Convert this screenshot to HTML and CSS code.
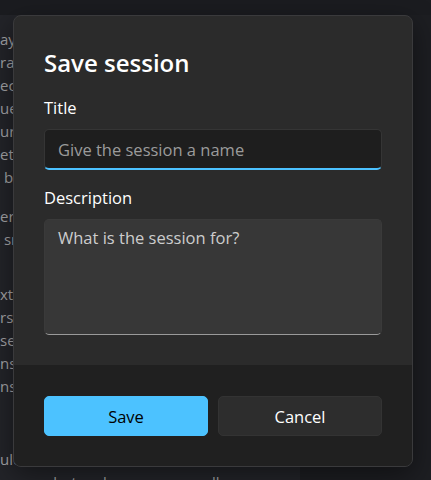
FILE: index.html
```html
<!DOCTYPE html>
<html lang="en">
<head>
<meta charset="utf-8">
<title>Save session</title>
<link rel="stylesheet" href="styles.css">
</head>
<body>
<div class="app">
  <div class="topbar"></div>
  <div class="main">
    <div class="doc">
      <div class="para p1">
        <div class="ln">ay</div>
        <div class="ln">ra</div>
        <div class="ln">ec</div>
        <div class="ln">ue</div>
        <div class="ln">ur</div>
        <div class="ln">et</div>
        <div class="ln">&nbsp;b</div>
      </div>
      <div class="para p2">
        <div class="ln">er</div>
        <div class="ln">&nbsp;sn</div>
      </div>
      <div class="para p3">
        <div class="ln">xt</div>
        <div class="ln">rsa</div>
        <div class="ln">se</div>
        <div class="ln">ns</div>
        <div class="ln">ns</div>
      </div>
      <div class="para p4">
        <div class="ln">ulc</div>
        <div class="ln">e snapshot, unless you manually save</div>
      </div>
    </div>
    <div class="side"></div>
  </div>

  <div class="dialog">
    <div class="dialog-body">
      <h1 class="dialog-title">Save session</h1>
      <label class="field-label">Title</label>
      <div class="input input-active"><span class="placeholder">Give the session a name</span></div>
      <label class="field-label label-desc">Description</label>
      <div class="textarea"><span class="ta-text">What is the session for?</span></div>
    </div>
    <div class="dialog-footer">
      <button class="btn btn-primary">Save</button>
      <button class="btn btn-secondary">Cancel</button>
    </div>
  </div>
</div>
</body>
</html>
```

FILE: styles.css
```css
html, body {
  margin: 0;
  padding: 0;
  height: 100%;
  background: #1c1d21;
  overflow: hidden;
}

.app {
  position: relative;
  width: 431px;
  height: 480px;
  display: flex;
  flex-direction: column;
  font-family: "Open Sans", "Noto Sans", sans-serif;
}

.topbar {
  height: 15px;
  background: #1b1c20;
  flex: none;
}

.main {
  flex: 1;
  display: flex;
}

.doc {
  width: 300px;
  background: #232429;
  padding-top: 13px;
  color: #a3a3a6;
  font-size: 15px;
  line-height: 23px;
  white-space: nowrap;
  overflow: hidden;
}

.ln {
  height: 23px;
}

.p2 { margin-top: 16px; }
.p3 { margin-top: 32px; }
.p4 { margin-top: 50px; }

.side {
  flex: 1;
  background: #1d1e22;
}

/* Dialog */
.dialog {
  position: absolute;
  left: 13px;
  top: 15px;
  width: 400px;
  height: 452px;
  box-sizing: border-box;
  border: 1px solid #3a3a3c;
  border-radius: 8px;
  background: #2b2b2b;
  display: flex;
  flex-direction: column;
  overflow: hidden;
  box-shadow: 0 8px 28px rgba(0, 0, 0, 0.45);
}

.dialog-body {
  flex: 1;
  padding: 31px 30px 0;
  display: flex;
  flex-direction: column;
}

.dialog-title {
  margin: 0;
  font-size: 24px;
  font-weight: 600;
  line-height: 32px;
  color: #ffffff;
}

.field-label {
  display: block;
  margin-top: 17px;
  font-size: 16.5px;
  line-height: 24px;
  color: #ffffff;
}

.label-desc {
  margin-top: 16px;
}

.input {
  margin-top: 9px;
  height: 41px;
  box-sizing: border-box;
  background: #1e1e1e;
  border: 1px solid #353535;
  border-bottom: 2px solid #4cc2ff;
  border-radius: 5px;
  padding: 0 13px;
  display: flex;
  align-items: center;
}

.placeholder {
  font-size: 16.5px;
  color: #9b9b9b;
}

.textarea {
  margin-top: 9px;
  height: 116px;
  box-sizing: border-box;
  background: #373737;
  border: 1px solid #3a3a3a;
  border-bottom: 1px solid #9a9a9a;
  border-radius: 5px;
  padding: 6px 13px;
}

.ta-text {
  font-size: 16.5px;
  line-height: 24px;
  color: #cdcdcd;
}

.dialog-footer {
  height: 101px;
  box-sizing: border-box;
  background: #202020;
  padding: 31px 30px 30px;
  display: flex;
  gap: 10px;
}

.btn {
  flex: 1;
  height: 40px;
  border-radius: 5px;
  font-family: inherit;
  font-size: 16.5px;
  cursor: pointer;
}

.btn-primary {
  background: #4cc2ff;
  border: 1px solid #4cc2ff;
  color: #000000;
}

.btn-secondary {
  background: #2d2d2d;
  border: 1px solid #333333;
  color: #ffffff;
}
```
